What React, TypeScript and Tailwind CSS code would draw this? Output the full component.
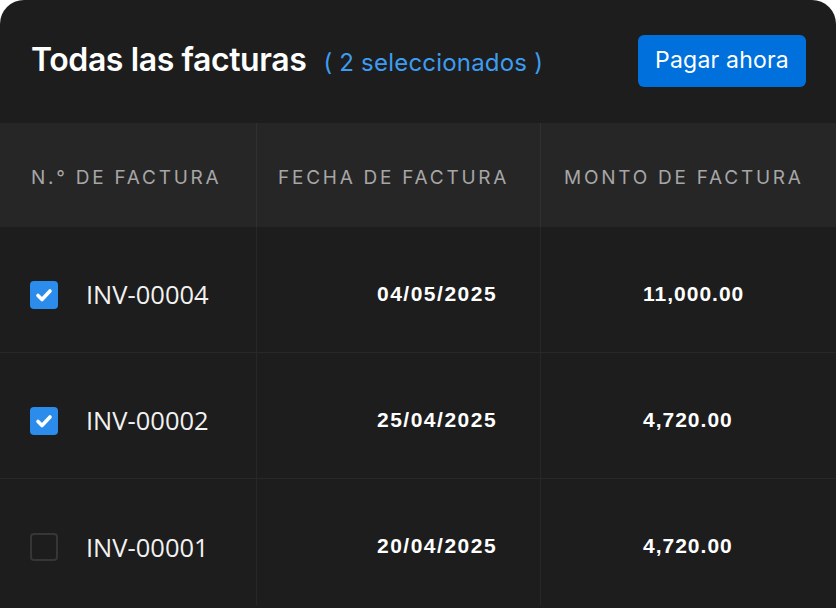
import { useState } from 'react';

type Invoice = { id: string; date: string; amount: string };

const invoices: Invoice[] = [
  { id: 'INV-00004', date: '04/05/2025', amount: '11,000.00' },
  { id: 'INV-00002', date: '25/04/2025', amount: '4,720.00' },
  { id: 'INV-00001', date: '20/04/2025', amount: '4,720.00' },
];

function Checkbox({ checked, onChange }: { checked: boolean; onChange: () => void }) {
  return (
    <button
      onClick={onChange}
      className={`w-[28px] h-[28px] rounded-[4px] flex items-center justify-center shrink-0 ${
        checked ? 'bg-[#2b8ceb]' : 'border-2 border-[#363636]'
      }`}
    >
      {checked && (
        <svg className="w-[28px] h-[28px]" viewBox="0 0 28 28" fill="none">
          <path d="M8 14.5l4 4 8-8.5" stroke="#fff" strokeWidth={3.6} strokeLinecap="round" strokeLinejoin="round" />
        </svg>
      )}
    </button>
  );
}

export default function App() {
  const [selected, setSelected] = useState<string[]>(['INV-00004', 'INV-00002']);

  const toggle = (id: string) =>
    setSelected(s => (s.includes(id) ? s.filter(x => x !== id) : [...s, id]));

  return (
    <div className="w-[836px] h-[608px] bg-white overflow-hidden">
      <div className="w-full h-full bg-[#1d1d1d] rounded-t-[24px] overflow-hidden flex flex-col">
        {/* Header */}
        <div className="h-[123px] flex items-center justify-between pl-[31px] pr-[30px] shrink-0">
          <div className="flex items-baseline gap-[17px] pb-[3px]">
            <h1 className="text-[32px] font-semibold text-white font-['Inter',sans-serif] tracking-[-0.4px]">
              Todas las facturas
            </h1>
            <span className="text-[24px] text-[#3d9cf0] font-['Inter',sans-serif] tracking-[0.2px]">
              ( {selected.length} seleccionados )
            </span>
          </div>
          <button className="w-[168px] h-[52px] rounded-[6px] bg-[#0070dc] text-white text-[23px] font-['Inter',sans-serif] tracking-[0.2px] mb-[2px]">
            Pagar ahora
          </button>
        </div>

        {/* Column header */}
        <div className="h-[104px] bg-[#262626] grid grid-cols-[257px_284px_1fr] shrink-0 text-[19px] tracking-[0.145em] text-[#a6a6a6] font-['Inter',sans-serif]">
          <div className="flex items-center pt-[6px] pl-[31px] border-r border-[#2d3034]">N.° DE FACTURA</div>
          <div className="flex items-center pt-[6px] pl-[21px] border-r border-[#2d3034]">FECHA DE FACTURA</div>
          <div className="flex items-center pt-[6px] pl-[23px]">MONTO DE FACTURA</div>
        </div>

        {/* Rows */}
        {invoices.map((inv, i) => (
          <div
            key={inv.id}
            className={`grid grid-cols-[257px_284px_1fr] h-[126px] shrink-0 ${
              i < invoices.length - 1 ? 'border-b border-[#282828]' : ''
            }`}
          >
            <div className="flex items-center gap-[28px] pt-[10px] pl-[30px] border-r border-[#272727]">
              <Checkbox checked={selected.includes(inv.id)} onChange={() => toggle(inv.id)} />
              <span className="text-[25.5px] text-[#f2f2f2] font-['Open_Sans',sans-serif]">{inv.id}</span>
            </div>
            <div className="flex items-center pt-[8px] pl-[120px] border-r border-[#272727]">
              <span className="text-[21px] font-bold text-white tracking-[1.5px] font-['Liberation_Sans',sans-serif]">
                {inv.date}
              </span>
            </div>
            <div className="flex items-center pt-[8px] pl-[102px]">
              <span className="text-[21px] font-bold text-white tracking-[1px] font-['Liberation_Sans',sans-serif]">
                {inv.amount}
              </span>
            </div>
          </div>
        ))}
      </div>
    </div>
  );
}
